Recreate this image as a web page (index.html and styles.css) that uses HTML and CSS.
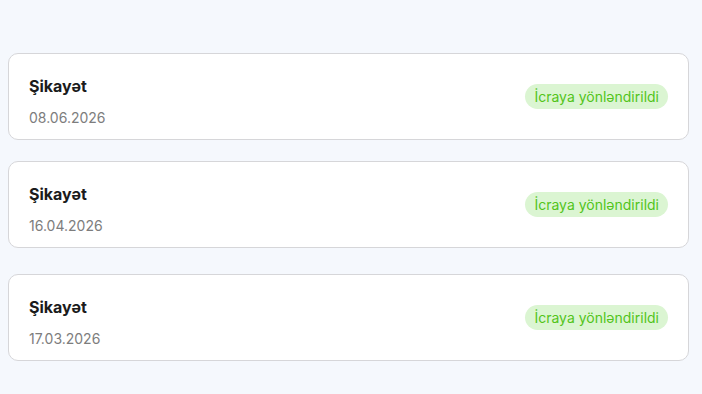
FILE: index.html
```html
<!DOCTYPE html>
<html lang="az">
<head>
<meta charset="utf-8">
<title>Şikayətlər</title>
<link rel="stylesheet" href="styles.css">
</head>
<body>
<main class="list">
  <div class="card">
    <div class="info">
      <div class="title">Şikayət</div>
      <div class="date">08.06.2026</div>
    </div>
    <span class="badge">İcraya yönləndirildi</span>
  </div>
  <div class="card">
    <div class="info">
      <div class="title">Şikayət</div>
      <div class="date">16.04.2026</div>
    </div>
    <span class="badge">İcraya yönləndirildi</span>
  </div>
  <div class="card card--spaced">
    <div class="info">
      <div class="title">Şikayət</div>
      <div class="date">17.03.2026</div>
    </div>
    <span class="badge">İcraya yönləndirildi</span>
  </div>
</main>
</body>
</html>
```

FILE: styles.css
```css
html, body {
  margin: 0;
  padding: 0;
  background: #f5f8fd;
  font-family: Inter, "Noto Sans", sans-serif;
}
.list {
  display: flex;
  flex-direction: column;
  gap: 21px;
  padding: 53px 13px 20px 8px;
}
.card {
  box-sizing: border-box;
  height: 87px;
  background: #ffffff;
  border: 1px solid #d6d6d9;
  border-radius: 10px;
  display: flex;
  align-items: center;
  justify-content: space-between;
  padding: 0 20px 0 20px;
}
.card--spaced {
  margin-top: 5px;
}
.info {
  display: flex;
  flex-direction: column;
  gap: 14px;
  padding-top: 11px;
}
.title {
  font-size: 16px;
  font-weight: 700;
  color: #1b1b1b;
  line-height: 18px;
}
.date {
  font-size: 14px;
  color: #7d7d7d;
  line-height: 18px;
}
.badge {
  display: inline-block;
  background: #dbf5d2;
  color: #52c41a;
  font-size: 14px;
  line-height: 25px;
  height: 25px;
  padding: 0 9px;
  border-radius: 13px;
}
```
